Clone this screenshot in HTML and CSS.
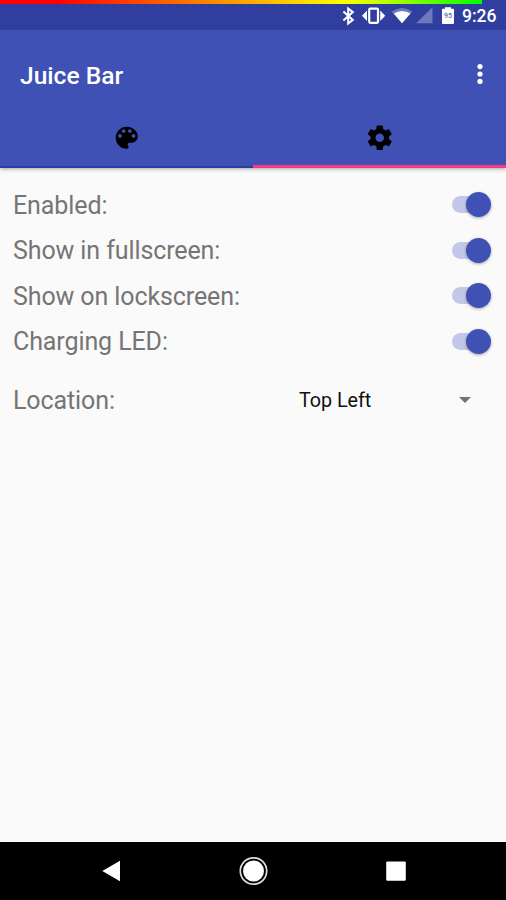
FILE: index.html
```html
<!DOCTYPE html>
<html lang="en">
<head>
<meta charset="utf-8">
<title>Juice Bar</title>
<link rel="stylesheet" href="styles.css">
</head>
<body>
<div class="screen">
  <div class="status">
    <div class="juice"></div>
    <svg class="status-icons" width="130" height="24" viewBox="330 4 130 24">
      <path d="M343.400 11.500 352.800 20 348.200 23.500V8.500L352.800 12 343.400 20.500" fill="none" stroke="#fff" stroke-width="2.100"/>
      <rect x="369.200" y="8.600" width="8.800" height="14.200" rx="1" fill="none" stroke="#fff" stroke-width="2.200"/>
      <path d="M367 10.500V21L362 15.700ZM380.200 10.500V21L385.200 15.700Z" fill="#fff"/>
      <path d="M391.500 11.500Q402 4.500 412.500 11.500L402 23.300Z" fill="#fff" opacity=".3"/>
      <path d="M393.800 13.500Q402 8.500 410.500 13.500L402 23.300Z" fill="#fff"/>
      <path d="M432.500 7.300V23.300H416Z" fill="#fff" opacity=".3"/>
      <path d="M442 9.600Q442 8.800 442.800 8.800H445V7.200H451V8.800H453.200Q454 8.800 454 9.600V23.200Q454 24 453.200 24H442.800Q442 24 442 23.200Z" fill="#fff"/>
      <text class="level" x="448" y="18" text-anchor="middle">95</text>
    </svg>
    <span class="clock">9:26</span>
  </div>
  <header class="header">
    <div class="toolbar">
      <h1 class="title">Juice Bar</h1>
      <svg class="more" width="8" height="24" viewBox="0 0 8 24"><g fill="#fff"><circle cx="4" cy="4.600" r="2.600"/><circle cx="4" cy="12" r="2.600"/><circle cx="4" cy="19.400" r="2.600"/></g></svg>
    </div>
    <nav class="tabs">
      <div class="tab"><svg class="tab-icon" viewBox="0 0 24 24"><path d="M12 3c-4.970 0-9 4.030-9 9s4.030 9 9 9c.83 0 1.500-.67 1.500-1.500 0-.39-.15-.74-.39-1.010-.23-.26-.38-.61-.38-.99 0-.83.67-1.500 1.500-1.500H16c2.760 0 5-2.240 5-5 0-4.420-4.030-8-9-8zm-5.500 9c-.83 0-1.500-.67-1.500-1.500S5.670 9 6.500 9 8 9.670 8 10.500 7.330 12 6.500 12zm3-4C8.670 8 8 7.330 8 6.500S8.670 5 9.500 5s1.500.67 1.500 1.500S10.330 8 9.500 8zm5 0c-.83 0-1.500-.67-1.500-1.500S13.670 5 14.500 5s1.500.67 1.500 1.500S15.330 8 14.500 8zm3 4c-.83 0-1.500-.67-1.500-1.500S16.670 9 17.500 9s1.500.67 1.500 1.500-.67 1.500-1.500 1.500z"/></svg></div>
      <div class="tab active"><svg class="tab-icon" viewBox="0 0 24 24"><path d="M19.430 12.980c.04-.32.07-.64.07-.98s-.03-.66-.07-.98l2.110-1.650c.19-.15.24-.42.12-.64l-2-3.460c-.12-.22-.39-.3-.61-.22l-2.490 1c-.52-.4-1.080-.73-1.690-.98l-.38-2.650C14.460 2.180 14.250 2 14 2h-4c-.25 0-.46.18-.49.42l-.38 2.650c-.61.25-1.170.59-1.690.98l-2.490-1c-.23-.09-.49 0-.61.22l-2 3.460c-.13.22-.07.49.12.64l2.110 1.650c-.04.32-.07.65-.07.98s.03.66.07.98l-2.110 1.650c-.19.15-.24.42-.12.64l2 3.460c.12.22.39.3.61.22l2.490-1c.52.4 1.080.73 1.690.98l.38 2.650c.03.24.24.42.49.42h4c.25 0 .46-.18.49-.42l.38-2.650c.61-.25 1.170-.59 1.690-.98l2.490 1c.23.09.49 0 .61-.22l2-3.460c.12-.22.07-.49-.12-.64l-2.110-1.650zM12 15.500c-1.930 0-3.500-1.570-3.500-3.500s1.570-3.500 3.500-3.500 3.500 1.570 3.500 3.500-1.570 3.500-3.500 3.500z"/></svg></div>
    </nav>
  </header>
  <main class="settings">
    <div class="row"><span class="label">Enabled:</span><span class="switch"></span></div>
    <div class="row"><span class="label">Show in fullscreen:</span><span class="switch"></span></div>
    <div class="row"><span class="label">Show on lockscreen:</span><span class="switch"></span></div>
    <div class="row"><span class="label">Charging LED:</span><span class="switch"></span></div>
    <div class="row location"><span class="label">Location:</span><div class="spinner"><span class="value">Top Left</span><svg width="12" height="6" viewBox="0 0 12 6"><path d="M0 0H12L6 6Z" fill="#737373"/></svg></div></div>
  </main>
  <footer class="navbar">
    <svg width="30" height="30" viewBox="0 0 30 30"><path d="M6.300 15 24 4.700V25.300Z" fill="#fff"/></svg>
    <svg width="30" height="30" viewBox="0 0 30 30"><circle cx="14.500" cy="15" r="13.200" fill="none" stroke="#ddd" stroke-width="1.700"/><circle cx="14.500" cy="15" r="10.500" fill="#fff"/></svg>
    <svg width="30" height="30" viewBox="0 0 30 30"><rect x="5.200" y="5.500" width="19.600" height="19.300" rx="1.200" fill="#fff"/></svg>
  </footer>
</div>
</body>
</html>
```
FILE: styles.css
```css
* { box-sizing: border-box; }
body { margin: 0; font-family: Roboto, "Liberation Sans", sans-serif; }
.screen { width: 506px; height: 900px; display: flex; flex-direction: column; background: #fafafa; overflow: hidden; }
.status { position: relative; height: 30px; flex: none; background: #303f9f; display: flex; justify-content: flex-end; align-items: center; padding: 2px 9px 0 0; color: #fff; }
.juice { position: absolute; left: 0; top: 0; width: 482px; height: 4px; background: linear-gradient(to right, #f00 0, #f00 12%, #ff0 72%, #0f0 100%); }
.status-icons { flex: none; margin-right: 2px; }
.level { font-size: 7px; font-weight: 500; fill: #5965b2; }
.clock { font-size: 17.500px; font-weight: 500; line-height: 24px; width: 35px; white-space: nowrap; }
.header { height: 138px; flex: none; background: #3f51b5; box-shadow: 0 1px 4px rgba(0,0,0,.35); display: flex; flex-direction: column; }
.toolbar { height: 77px; display: flex; align-items: center; justify-content: space-between; padding: 13px 22px 0 20px; }
.title { margin: 2px 0 0; color: #fff; font-size: 24.600px; font-weight: 500; line-height: 30px; }
.more { margin-top: -3px; }
.tabs { flex: 1; display: flex; }
.tab { flex: 1; display: flex; justify-content: center; align-items: center; padding-top: 2px; border-bottom: 2px solid #2b3ca4; }
.tab.active { padding-top: 3px; border-bottom: 3px solid #f73c83; }
.tab-icon { width: 29.500px; height: 29.500px; }
.settings { flex: 1; padding: 14px 16px 0 13px; }
.row { height: 45.500px; display: flex; align-items: center; justify-content: space-between; }
.label { padding-top: 2px; font-size: 25px; letter-spacing: -0.1px; line-height: 30px; color: #757575; }
.switch { position: relative; width: 38px; height: 25px; display: flex; align-items: center; }
.switch::before { content: ""; width: 34px; height: 17px; border-radius: 9px; background: #c3c8e8; }
.switch::after { content: ""; position: absolute; right: -0.500px; top: 0; width: 25px; height: 25px; border-radius: 50%; background: #3f51b5; box-shadow: 0 1px 3px rgba(0,0,0,.35); }
.location { margin-top: 13px; }
.spinner { width: 172px; margin-right: 19px; display: flex; justify-content: space-between; align-items: center; font-size: 19.700px; color: #111; }
.value { padding-top: 1px; }
.navbar { height: 58px; flex: none; background: #000; display: flex; align-items: center; justify-content: space-between; padding: 0 95px 0 96px; }
```
